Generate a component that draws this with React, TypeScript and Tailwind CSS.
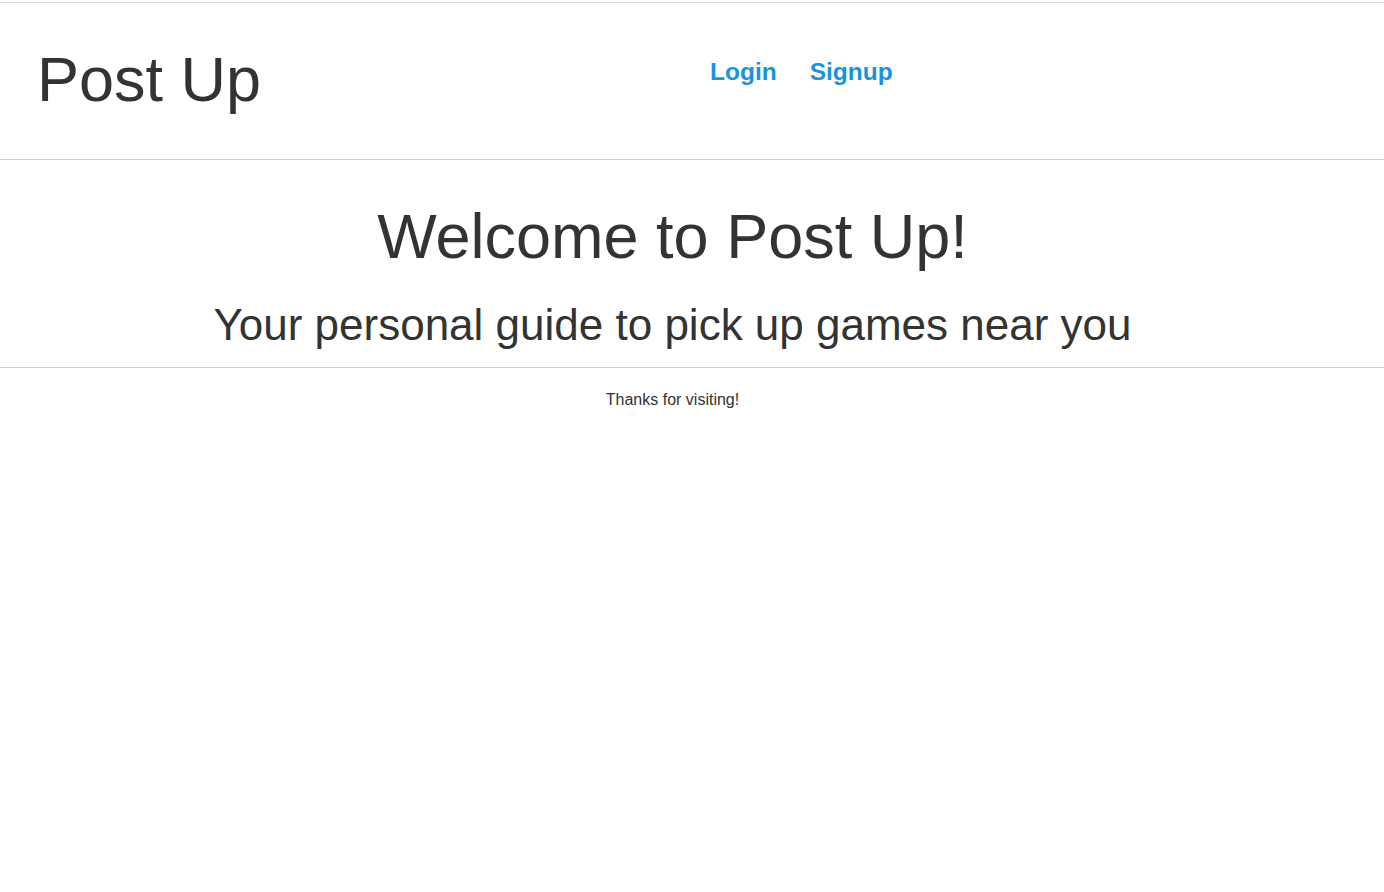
import React from 'react';

const App = () => {
  return (
    <div className="min-h-screen w-full bg-white text-[#333] font-['Liberation_Sans',Arial,sans-serif]">
      <div className="mt-[2px] border-t border-[#dddddd]" />

      {/* Header */}
      <header className="h-[157px] flex border-b border-[#cccccc]">
        <div className="w-[710px] pl-[37px] pt-[45px]">
          <h1 className="text-[63px] leading-none">Post Up</h1>
        </div>
        <nav className="flex gap-[33px] pt-[57px] text-[24.5px] leading-none font-bold text-[#1a93dc]">
          <a href="#">Login</a>
          <a href="#">Signup</a>
        </nav>
      </header>

      {/* Hero */}
      <section className="pt-[45px] pb-[20px] pr-[39px] text-center border-b border-[#cccccc]">
        <h2 className="text-[63px] leading-none">Welcome to Post Up!</h2>
        <h3 className="mt-[35px] text-[44px] leading-none">Your personal guide to pick up games near you</h3>
      </section>

      <footer className="pt-[24px] pr-[39px] text-center text-[16px] leading-none">
        Thanks for visiting!
      </footer>
    </div>
  );
};

export default App;
